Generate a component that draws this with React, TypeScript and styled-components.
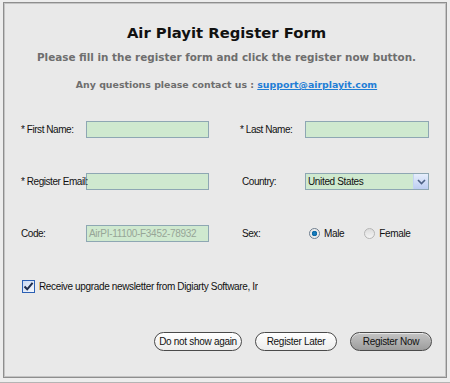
import React from "react";
import styled, { createGlobalStyle } from "styled-components";

const GlobalStyle = createGlobalStyle`
    html, body {
        margin: 0;
        padding: 0;
        background: #ededed;
    }
    #root {
        width: 450px;
        height: 383px;
    }
`;

const FIELD_FONT = `Tahoma, "Liberation Sans", Arial, sans-serif`;
const HEAD_FONT = `Verdana, "DejaVu Sans", sans-serif`;

const App = () => {
    return (
        <>
            <GlobalStyle />
            <_window>
                <_frame>
                    <_title>Air Playit Register Form</_title>
                    <_subtitle>Please fill in the register form and click the register now button.</_subtitle>
                    <_contact>
                        Any questions please contact us : <_mail href="#">support@airplayit.com</_mail>
                    </_contact>

                    <_form>
                        <_row>
                            <_field>
                                <_label>* First Name:</_label>
                                <_input />
                            </_field>
                            <_field $right>
                                <_label>* Last Name:</_label>
                                <_input />
                            </_field>
                        </_row>
                        <_row>
                            <_field>
                                <_label>* Register Email:</_label>
                                <_input />
                            </_field>
                            <_field $right>
                                <_label $indent>Country:</_label>
                                <_select>
                                    <_selectText>United States</_selectText>
                                    <_selectArrow>
                                        <svg width="9" height="6" viewBox="0 0 9 6">
                                            <path d="M1 1 L4.5 4.5 L8 1" fill="none" stroke="#4d6185" strokeWidth="1.6" />
                                        </svg>
                                    </_selectArrow>
                                </_select>
                            </_field>
                        </_row>
                        <_row>
                            <_field>
                                <_label>Code:</_label>
                                <_input $disabled>AirPI-11100-F3452-78932</_input>
                            </_field>
                            <_field $right>
                                <_label $indent>Sex:</_label>
                                <_radios>
                                    <_radioItem>
                                        <_radio $checked />
                                        Male
                                    </_radioItem>
                                    <_radioItem>
                                        <_radio />
                                        Female
                                    </_radioItem>
                                </_radios>
                            </_field>
                        </_row>
                    </_form>

                    <_checkRow>
                        <_checkbox>
                            <svg width="11" height="11" viewBox="0 0 11 11">
                                <path d="M1.5 5.5 L4.2 8.3 L9.6 1.8" fill="none" stroke="#1f2d4d" strokeWidth="2" />
                            </svg>
                        </_checkbox>
                        <_checkLabel>Receive upgrade newsletter from Digiarty Software, Inc</_checkLabel>
                    </_checkRow>

                    <_buttons>
                        <_button $w={88}>Do not show again</_button>
                        <_button $w={82}>Register Later</_button>
                        <_button $w={82} $primary>
                            Register Now
                        </_button>
                    </_buttons>
                </_frame>
            </_window>
        </>
    );
};

export default App;

const _window = styled.div`
    width: 450px;
    height: 383px;
    box-sizing: border-box;
    padding: 2px 3px 4px 3px;
    border-bottom: 1px solid #b4b4b4;
`;

const _frame = styled.div`
    height: 100%;
    box-sizing: border-box;
    background: #e9e9e9;
    border: 1px solid #8e8e8e;
    box-shadow: inset 0 0 0 1px #c4c4c4;
    padding: 20px 14px 0 17px;
    display: flex;
    flex-direction: column;
`;

const _title = styled.h1`
    margin: 0;
    text-align: center;
    font-family: ${HEAD_FONT};
    font-size: 14.8px;
    line-height: 20px;
    font-weight: bold;
    color: #111;
`;

const _subtitle = styled.p`
    margin: 7px 0 0;
    text-align: center;
    font-family: ${HEAD_FONT};
    font-size: 10.4px;
    line-height: 14px;
    font-weight: bold;
    color: #6e6e6e;
    white-space: nowrap;
`;

const _contact = styled.p`
    margin: 14px 0 0;
    text-align: center;
    font-family: ${HEAD_FONT};
    font-size: 9.4px;
    line-height: 14px;
    font-weight: bold;
    color: #6e6e6e;
`;

const _mail = styled.a`
    color: #1f7ed6;
    text-decoration: underline;
`;

const _form = styled.div`
    margin-top: 29px;
    display: flex;
    flex-direction: column;
    gap: 35px;
`;

const _row = styled.div`
    display: flex;
    gap: 31px;
`;

const _field = styled.div<{ $right?: boolean }>`
    display: grid;
    grid-template-columns: 65px 1fr;
    align-items: center;
    width: ${(p) => (p.$right ? 189 : 188)}px;
`;

// labels may run into the box (the colon of "Register Email:" touches it)
const _label = styled.span<{ $indent?: boolean }>`
    position: relative;
    z-index: 1;
    font-family: ${FIELD_FONT};
    font-size: 10px;
    letter-spacing: -0.45px;
    color: #111;
    white-space: nowrap;
    padding-left: ${(p) => (p.$indent ? 2 : 0)}px;
`;

const _input = styled.div<{ $disabled?: boolean }>`
    height: 17px;
    box-sizing: border-box;
    background: #cfe9cf;
    border: 1px solid #8ea7b3;
    font-family: ${FIELD_FONT};
    font-size: 10px;
    letter-spacing: -0.3px;
    line-height: 15px;
    padding-left: 2px;
    color: ${(p) => (p.$disabled ? "#97a597" : "#111")};
    white-space: nowrap;
    overflow: hidden;
`;

const _select = styled.div`
    height: 17px;
    box-sizing: border-box;
    background: #cfe9cf;
    border: 1px solid #8ea7b3;
    display: flex;
    align-items: stretch;
`;

const _selectText = styled.span`
    flex: 1;
    font-family: ${FIELD_FONT};
    font-size: 10px;
    letter-spacing: -0.35px;
    line-height: 15px;
    padding-left: 2px;
    color: #111;
`;

const _selectArrow = styled.span`
    width: 14px;
    display: flex;
    align-items: center;
    justify-content: center;
    background: linear-gradient(#e6eefc, #bccdf1);
    border-left: 1px solid #c3d3f3;
`;

const _radios = styled.div`
    display: flex;
    gap: 20px;
    padding-left: 4px;
`;

const _radioItem = styled.label`
    display: flex;
    align-items: center;
    gap: 4px;
    font-family: ${FIELD_FONT};
    font-size: 10px;
    letter-spacing: -0.35px;
    color: #111;
`;

const _radio = styled.span<{ $checked?: boolean }>`
    width: 11px;
    height: 11px;
    box-sizing: border-box;
    border-radius: 50%;
    border: 1px solid ${(p) => (p.$checked ? "#6f7f8f" : "#b5b5b5")};
    background: ${(p) =>
        p.$checked
            ? "radial-gradient(circle, #1a82c4 0, #0f6aa6 2.5px, #e8e8e8 3px, #f8f8f8 100%)"
            : "linear-gradient(#dcdcdc, #f4f4f4)"};
`;

const _checkRow = styled.div`
    margin-top: 38px;
    display: flex;
    align-items: center;
    gap: 4px;
    padding-left: 1px;
`;

const _checkbox = styled.span`
    width: 13px;
    height: 13px;
    box-sizing: border-box;
    border: 1px solid #2b5fb3;
    background: linear-gradient(135deg, #c9d9f3, #f4f7fc);
    display: flex;
    align-items: center;
    justify-content: center;
`;

const _checkLabel = styled.span`
    width: 219px;
    overflow: hidden;
    white-space: nowrap;
    font-family: ${FIELD_FONT};
    font-size: 10px;
    letter-spacing: -0.35px;
    color: #111;
`;

const _buttons = styled.div`
    margin-top: 39px;
    display: flex;
    justify-content: flex-end;
    gap: 13px;
`;

const _button = styled.button<{ $w: number; $primary?: boolean }>`
    width: ${(p) => p.$w}px;
    height: 19px;
    padding: 0;
    border-radius: 10px;
    border: 1px solid #4a4a4a;
    font-family: ${FIELD_FONT};
    font-size: 10px;
    letter-spacing: -0.3px;
    color: #111;
    white-space: nowrap;
    background: ${(p) =>
        p.$primary ? "linear-gradient(#c4c4c4, #9d9d9d)" : "linear-gradient(#ffffff, #ececec)"};
    box-shadow: inset 0 1px 0 rgba(255, 255, 255, 0.6);
`;
